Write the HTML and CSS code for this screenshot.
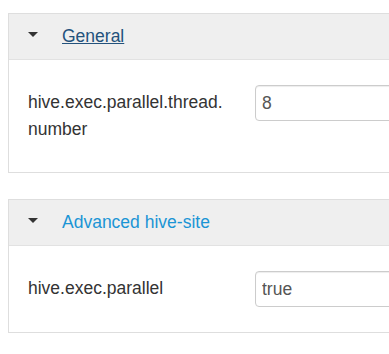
FILE: index.html
```html
<!DOCTYPE html>
<html>
<head>
<meta charset="utf-8">
<link rel="stylesheet" href="styles.css">
</head>
<body>
<div class="page">
  <section class="panel">
    <div class="panel-heading">
      <span class="caret"></span>
      <a class="panel-title title-active" href="#">General</a>
    </div>
    <div class="panel-body">
      <div class="form-row">
        <label class="form-label">hive.exec.parallel.thread.<wbr>number</label>
        <input class="form-control" type="text" value="8">
      </div>
    </div>
  </section>
  <section class="panel">
    <div class="panel-heading">
      <span class="caret"></span>
      <a class="panel-title" href="#">Advanced hive-site</a>
    </div>
    <div class="panel-body">
      <div class="form-row">
        <label class="form-label">hive.exec.parallel</label>
        <input class="form-control" type="text" value="true">
      </div>
    </div>
  </section>
</div>
</body>
</html>
```
FILE: styles.css
```css
html, body {
  margin: 0;
  padding: 0;
  background: #fff;
  overflow: hidden;
}
body {
  font-family: "Liberation Sans", Arial, sans-serif;
  font-size: 17.5px;
  color: #333;
}
.page {
  display: flex;
  flex-direction: column;
  gap: 26px;
  padding: 13px 0 0 8px;
  width: 460px;
}
.panel {
  border: 1px solid #dedede;
  background: #fff;
}
.panel-heading {
  display: flex;
  align-items: center;
  gap: 24px;
  background: #efefef;
  border-bottom: 1px solid #e2e2e2;
  padding: 10px 19px;
  height: 25px;
  line-height: 25px;
}
.caret {
  width: 0;
  height: 0;
  border-left: 5px solid transparent;
  border-right: 5px solid transparent;
  border-top: 5px solid #333;
  margin-top: -5px;
}
.panel-title {
  color: #1b95d5;
  text-decoration: none;
}
.title-active {
  color: #23527c;
  text-decoration: underline;
}
.panel-body {
  padding: 25px 0 25px 19px;
}
.form-row {
  display: flex;
  align-items: flex-start;
}
.form-label {
  width: 227px;
  flex: none;
  line-height: 27px;
  padding: 4px 0;
}
.form-control {
  flex: 1;
  height: 36px;
  box-sizing: border-box;
  border: 1px solid #ccc;
  border-radius: 4px;
  padding: 0 6px;
  font-family: "Liberation Sans", Arial, sans-serif;
  font-size: 17.5px;
  color: #555;
  box-shadow: inset 0 1px 1px rgba(0,0,0,0.075);
  outline: none;
}
```
